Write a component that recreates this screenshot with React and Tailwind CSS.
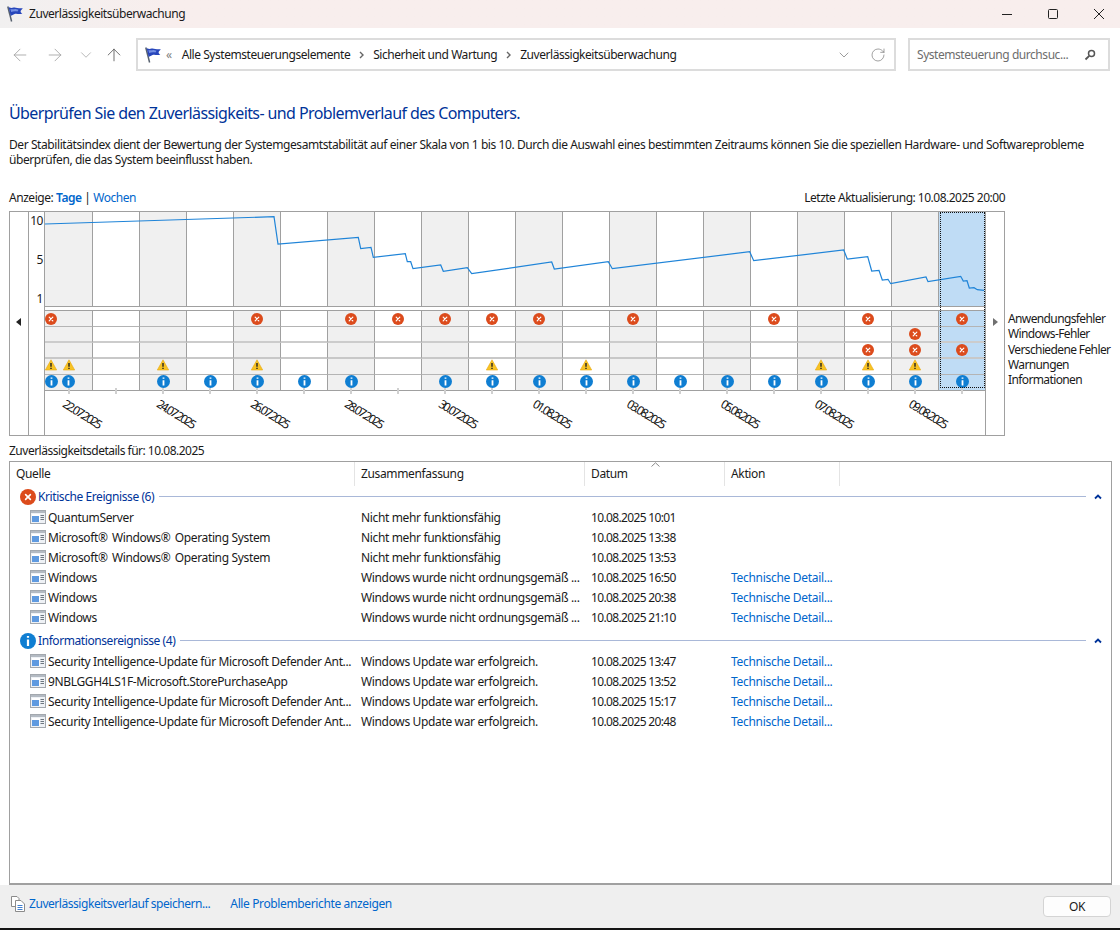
import { ArrowLeft, ArrowRight, ArrowUp, ChevronDown, RotateCw } from "lucide-react";

const days = Array.from({ length: 20 }, (_, i) => i);

const graphPoints =
  "45,224 274,216.7 278,244 358.3,237.3 360.7,248.7 371,247.3 373.3,257.3 405.3,253.7 407.3,261.7 410.7,261.7 413,268.7 440.7,265 443.3,271.3 467.3,267.7 471.7,273.7 551.7,262 554.3,269 608.3,261.7 612.3,268.7 749.7,251.7 753.7,260.7 843.7,250 847.3,259 867.7,256.7 871.7,271 879,270.3 882.3,280 888,279.3 890.7,283.7 926,277 928,281.7 960.7,276.3 963.3,281 967,280.7 969.3,288 974,287.7 977.3,289.7 984,290.3";

// "left" is the extra slot some events use at the start of a day column
const eventRows = [
  { label: "Anwendungsfehler", kind: "error", center: [4, 6, 7, 8, 9, 10, 12, 15, 17, 19], left: [0], cell: "h-[16px] border-b border-[#b4b4b4]" },
  { label: "Windows-Fehler", kind: "error", center: [18], left: [], cell: "h-[16px] border-b-2 border-[#cccccc]" },
  { label: "Verschiedene Fehler", kind: "error", center: [17, 18, 19], left: [], cell: "h-[16px] border-b-2 border-[#c8c8c8]" },
  { label: "Warnungen", kind: "warning", center: [0, 2, 4, 9, 11, 16, 17, 18], left: [0], cell: "h-[16px] border-b border-[#b4b4b4]" },
  { label: "Informationen", kind: "info", center: [0, 2, 3, 4, 5, 6, 8, 9, 10, 11, 12, 13, 14, 15, 16, 17, 18, 19], left: [0], cell: "h-[15px]" },
];

const dateLabels = ["22.07.2025", "24.07.2025", "26.07.2025", "28.07.2025", "30.07.2025", "01.08.2025", "03.08.2025", "05.08.2025", "07.08.2025", "09.08.2025"];

const criticalRows = [
  ["QuantumServer", "Nicht mehr funktionsfähig", "10.08.2025 10:01", ""],
  ["Microsoft® Windows® Operating System", "Nicht mehr funktionsfähig", "10.08.2025 13:38", ""],
  ["Microsoft® Windows® Operating System", "Nicht mehr funktionsfähig", "10.08.2025 13:53", ""],
  ["Windows", "Windows wurde nicht ordnungsgemäß ...", "10.08.2025 16:50", "Technische Detail..."],
  ["Windows", "Windows wurde nicht ordnungsgemäß ...", "10.08.2025 20:38", "Technische Detail..."],
  ["Windows", "Windows wurde nicht ordnungsgemäß ...", "10.08.2025 21:10", "Technische Detail..."],
];

const infoRows = [
  ["Security Intelligence-Update für Microsoft Defender Ant...", "Windows Update war erfolgreich.", "10.08.2025 13:47", "Technische Detail..."],
  ["9NBLGGH4LS1F-Microsoft.StorePurchaseApp", "Windows Update war erfolgreich.", "10.08.2025 13:52", "Technische Detail..."],
  ["Security Intelligence-Update für Microsoft Defender Ant...", "Windows Update war erfolgreich.", "10.08.2025 15:17", "Technische Detail..."],
  ["Security Intelligence-Update für Microsoft Defender Ant...", "Windows Update war erfolgreich.", "10.08.2025 20:48", "Technische Detail..."],
];

function FlagIcon() {
  return (
    <svg width="16" height="16" viewBox="0 0 16 16" className="shrink-0">
      <path d="M0.8 0.5 L4.6 15.5" stroke="#56606e" strokeWidth="1.5" />
      <path d="M1.5 0.8 C3 2.2 5 2.2 6.5 1.6 C8.5 0.8 10.5 2.6 15.8 2.2 C14.8 3.6 13.5 4.4 13.6 5.4 C13.7 6.4 14.6 7 15.4 7.6 C12.5 8.8 10 7.4 7.6 8 C6.2 8.4 5 9.6 3.6 9.8 Z" fill="#2746bb" />
      <path d="M3.4 3 C5 3.8 7 3 8.5 3 L11.5 3.8 L10.5 5.6 C8.5 5 6 5.2 4.2 6 Z" fill="#7590e4" />
    </svg>
  );
}

function ErrorIcon({ size = 12 }) {
  return (
    <svg width={size} height={size} viewBox="0 0 12 12" className="shrink-0">
      <circle cx="6" cy="6" r="6" fill="#dc4b1c" />
      <path d="M4.2 4.2 L7.8 7.8 M7.8 4.2 L4.2 7.8" stroke="#ffffff" strokeWidth="1.2" strokeLinecap="round" />
    </svg>
  );
}

function WarningIcon() {
  return (
    <svg width="12" height="12" viewBox="0 0 12 12" className="mb-[3px] shrink-0">
      <path d="M6 0.8 L11.7 11 L0.3 11 Z" fill="#f7c325" stroke="#e9a80f" strokeWidth="0.6" strokeLinejoin="round" />
      <path d="M6 4 L6 7.8 M6 8.8 L6 10" stroke="#222222" strokeWidth="1.4" />
    </svg>
  );
}

function InfoIcon({ size = 13, className = "" }) {
  return (
    <svg width={size} height={size} viewBox="0 0 13 13" className={`shrink-0 ${className}`}>
      <circle cx="6.5" cy="6.5" r="6.5" fill="#0f7ed2" />
      <path d="M6.5 2.5 L6.5 3.8 M6.5 5.3 L6.5 10.5" stroke="#ffffff" strokeWidth="1.8" />
    </svg>
  );
}

function EventIcon({ kind }) {
  if (kind === "error") return <ErrorIcon />;
  if (kind === "warning") return <WarningIcon />;
  return <InfoIcon className="mb-[3px]" />;
}

function AppIcon() {
  return (
    <svg width="16" height="14" viewBox="0 0 16 14" className="shrink-0">
      <rect x="0.5" y="0.5" width="15" height="13" fill="#eef1f5" stroke="#a3a8ae" />
      <rect x="1" y="1" width="14" height="2" fill="#b3bac2" />
      <rect x="2" y="4" width="8" height="8" fill="#ffffff" />
      <rect x="2" y="6" width="7" height="6" fill="#5f9ae0" />
      <path d="M10.5 5.5 H14 M10.5 7.5 H14 M10.5 9.5 H14" stroke="#6d7780" />
    </svg>
  );
}

function DocsIcon() {
  return (
    <svg width="16" height="16" viewBox="0 0 16 16" className="shrink-0" fill="#ffffff" stroke="#8b8b8b">
      <path d="M1.5 0.5 H7 L9 2.5 V10.5 H1.5 Z" />
      <path d="M5.5 4.5 H11 L14.5 8 V15.5 H5.5 Z" />
      <path d="M7.5 9.5 H12.5 M7.5 11.5 H12.5 M7.5 13.5 H12.5" stroke="#3f7fd0" />
    </svg>
  );
}

function Collapse() {
  return (
    <svg width="8" height="6" viewBox="0 0 8 6">
      <path d="M1 4.5 L4 1.5 L7 4.5" fill="none" stroke="#003399" strokeWidth="1.8" />
    </svg>
  );
}

function Crumb() {
  return (
    <svg width="5" height="8" viewBox="0 0 5 8" className="mx-[9px] shrink-0">
      <path d="M1 1 L4 4 L1 7" fill="none" stroke="#666666" strokeWidth="1.4" />
    </svg>
  );
}

function GroupHeader({ icon, title, className }) {
  return (
    <div className={`flex h-[21px] items-center pl-[10px] pr-[9px] ${className}`}>
      {icon}
      <span className="ml-[2px] tracking-[-0.42px] text-[#003399]">{title}</span>
      <div className="ml-[5px] h-px flex-1 bg-[#a9b8d8]" />
      <div className="ml-[8px] mr-[0px] flex w-[8px] justify-center">
        <Collapse />
      </div>
    </div>
  );
}

// the ® signs sit a little apart from the word after them
function SourceName({ name }) {
  const parts = name.split("®");
  return (
    <span>
      {parts.map((part, i) => (
        <span key={i}>
          {part}
          {i < parts.length - 1 && <span className="mr-[1.5px]">®</span>}
        </span>
      ))}
    </span>
  );
}

function EventRow({ row }) {
  return (
    <div className="grid h-[20px] grid-cols-[345px_230px_140px_115px] items-center tracking-[-0.35px]">
      <div className="flex items-center gap-[2px] whitespace-pre pl-[20px]">
        <AppIcon />
        <SourceName name={row[0]} />
      </div>
      <div className="overflow-hidden whitespace-nowrap pl-[6px]">{row[1]}</div>
      <div className="whitespace-nowrap pl-[6px] tracking-[-0.65px]">{row[2]}</div>
      <div className="whitespace-nowrap pl-[6px] tracking-[-0.3px] text-[#0066cc]">{row[3]}</div>
    </div>
  );
}

export default function App() {
  return (
    <div className="h-[932px] w-[1120px] overflow-hidden bg-white font-['Noto_Sans',sans-serif] text-[12px] leading-[15px] tracking-[-0.45px] text-[#1a1a1a]">
      {/* Title bar */}
      <div className="flex h-[28px] items-center bg-linear-to-r from-[#f1f0f0] to-[#f8eeed] to-[15%] pl-[7px]">
        <FlagIcon />
        <span className="mb-[2px] ml-[6px]">Zuverlässigkeitsüberwachung</span>
        <div className="ml-auto flex items-center">
          <svg width="12" height="12" viewBox="0 0 12 12" className="mr-[34px]">
            <path d="M1 6.5 H11" stroke="#222222" />
          </svg>
          <svg width="12" height="12" viewBox="0 0 12 12" className="mr-[34px]">
            <rect x="1.5" y="1.5" width="9" height="9" rx="1" fill="none" stroke="#222222" />
          </svg>
          <svg width="12" height="12" viewBox="0 0 12 12" className="mr-[15px]">
            <path d="M1 1 L11 11 M11 1 L1 11" stroke="#222222" />
          </svg>
        </div>
      </div>

      {/* Navigation */}
      <div className="flex items-center pt-[10px]">
        <ArrowLeft size={20} strokeWidth={1} className="ml-[10px] text-[#a0a0a0]" />
        <ArrowRight size={20} strokeWidth={1} className="ml-[15px] text-[#a0a0a0]" />
        <ChevronDown size={18} strokeWidth={1} className="ml-[12px] text-[#a0a0a0]" />
        <ArrowUp size={20} strokeWidth={1} className="ml-[9px] text-[#555555]" />
        <div className="ml-[12px] flex h-[33px] w-[760px] items-center border-2 border-[#dcdcdc] pl-[7px]">
          <FlagIcon />
          <span className="ml-[5px] text-[#808080]">«</span>
          <span className="ml-[10px]">Alle Systemsteuerungselemente</span>
          <Crumb />
          <span>Sicherheit und Wartung</span>
          <Crumb />
          <span>Zuverlässigkeitsüberwachung</span>
          <ChevronDown size={16} strokeWidth={1.1} className="ml-auto text-[#777777]" />
          <RotateCw size={16} strokeWidth={1.1} className="ml-[18px] mr-[8px] text-[#808080]" />
        </div>
        <div className="ml-[12px] flex h-[33px] w-[202px] items-center border-2 border-[#dcdcdc] pl-[7px] pr-[12px] text-[#6d6d6d]">
          <span className="whitespace-nowrap">Systemsteuerung durchsuc...</span>
          <svg width="12" height="12" viewBox="0 0 12 12" className="ml-auto">
            <circle cx="7.5" cy="4.5" r="3" fill="none" stroke="#555555" strokeWidth="1.5" />
            <path d="M5.2 6.8 L1.5 10.5" stroke="#555555" strokeWidth="1.8" />
          </svg>
        </div>
      </div>

      {/* Intro */}
      <div className="pl-[9px]">
        <h1 className="mt-[32px] text-[16px] leading-[21px] tracking-[-0.6px] text-[#003399]">
          Überprüfen Sie den Zuverlässigkeits- und Problemverlauf des Computers.
        </h1>
        <p className="mt-[13px] w-[1095px] tracking-[-0.42px]">
          Der Stabilitätsindex dient der Bewertung der Systemgesamtstabilität auf einer Skala von 1 bis 10. Durch die Auswahl eines bestimmten Zeitraums können Sie die speziellen Hardware- und Softwareprobleme überprüfen, die das System beeinflusst haben.
        </p>
        <div className="mt-[23px] flex w-[996px] justify-between">
          <div>
            Anzeige: <span className="font-semibold text-[#0066cc]">Tage</span> | <span className="text-[#0066cc]">Wochen</span>
          </div>
          <div className="tracking-[-0.5px]">Letzte Aktualisierung: 10.08.2025 20:00</div>
        </div>

        {/* Chart */}
        <div className="mt-[6px] flex">
          <div className="relative flex h-[225px] w-[996px] border border-[#a0a0a0]">
            <div className="flex w-[19px] shrink-0 justify-center border-r border-[#a0a0a0] pt-[106px]">
              <svg width="5" height="8" viewBox="0 0 5 8" className="mr-[2px]">
                <path d="M5 0 V8 L0 4 Z" fill="#222222" />
              </svg>
            </div>
            <div className="flex w-[16px] shrink-0 flex-col items-end gap-[24px] border-r border-[#a0a0a0] pr-px pt-px">
              <span>10</span>
              <span>5</span>
              <span>1</span>
            </div>
            <div className="w-[940px] shrink-0">
              {/* Stability graph */}
              <div className="relative grid h-[95px] grid-cols-[repeat(20,47px)] border-b border-[#a0a0a0]">
                {days.map((d) => (
                  <div
                    key={d}
                    className={`${d > 0 ? "border-l border-[#a0a0a0]" : ""} ${d === 19 ? "bg-[#bfdcf5]" : d % 2 === 0 ? "bg-[#f0f0f0]" : "bg-white"}`}
                  />
                ))}
                <svg viewBox="45 212 940 94" width="940" height="94" className="absolute left-0 top-0">
                  <polyline points={graphPoints} fill="none" stroke="#1f84d8" strokeWidth="1.2" />
                </svg>
              </div>

              {/* Event rows */}
              <div className="mt-[3px] border-t border-[#a0a0a0]">
                {eventRows.map((row) => (
                  <div key={row.label} className="grid grid-cols-[repeat(20,47px)]">
                    {days.map((d) => (
                      <div
                        key={d}
                        className={`relative flex items-center justify-center ${row.cell} ${d > 0 ? "border-l border-l-[#a0a0a0]" : ""} ${d === 19 ? "bg-[#bfdcf5]" : d % 2 === 0 ? "bg-[#f0f0f0]" : "bg-white"}`}
                      >
                        {row.left.includes(d) && (
                          <div className="absolute left-0 top-0 flex h-full items-center">
                            <EventIcon kind={row.kind} />
                          </div>
                        )}
                        {row.center.includes(d) && <EventIcon kind={row.kind} />}
                      </div>
                    ))}
                  </div>
                ))}
              </div>

              {/* Date axis */}
              <div className="relative border-t border-[#a0a0a0]">
                <div className="grid h-[45px] grid-cols-[repeat(20,47px)]">
                  {days.map((d) => (
                    <div key={d} className="relative flex justify-center">
                      <div className="-mt-[3px] h-[6px] w-[2px] bg-[#d0d0d0]" />
                      {d % 2 === 0 && (
                        <span className="absolute left-[23px] top-[5px] origin-top-left rotate-[32deg] whitespace-nowrap tracking-[-1.9px] text-[#111111]">
                          {dateLabels[d / 2]}
                        </span>
                      )}
                    </div>
                  ))}
                </div>
              </div>
            </div>
            <div className="flex flex-1 justify-center border-l border-[#a0a0a0] pt-[106px]">
              <svg width="5" height="8" viewBox="0 0 5 8">
                <path d="M0 0 V8 L5 4 Z" fill="#707070" />
              </svg>
            </div>

            {/* Keyboard focus on the selected day */}
            <div className="absolute left-[930px] top-0 h-[176px] w-[45px] border border-dotted border-[#111111]" />
          </div>

          <div className="ml-[3px] flex flex-col gap-[0.25px] whitespace-nowrap pt-[100px] tracking-[-0.62px] text-[#1a1a1a]">
            {eventRows.map((row) => (
              <span key={row.label}>{row.label}</span>
            ))}
          </div>
        </div>

        <div className="mt-[7px] tracking-[-0.5px]">Zuverlässigkeitsdetails für: 10.08.2025</div>
      </div>

      {/* Details list */}
      <div className="ml-[9px] mt-[3px] h-[424px] w-[1103px] border border-b-2 border-[#a0a0a0]">
        <div className="relative grid h-[24px] grid-cols-[345px_230px_140px_115px] items-center tracking-[-0.35px]">
          <div className="flex h-full items-center border-r border-[#e4e4e4] pb-px pl-[6px]">Quelle</div>
          <div className="flex h-full items-center border-r border-[#e4e4e4] pb-px pl-[6px]">Zusammenfassung</div>
          <div className="flex h-full items-center border-r border-[#e4e4e4] pb-px pl-[6px]">Datum</div>
          <div className="flex h-full items-center border-r border-[#e4e4e4] pb-px pl-[6px]">Aktion</div>
          <svg width="9" height="5" viewBox="0 0 9 5" className="absolute left-[641px] top-0">
            <path d="M0.5 4.5 L4.5 0.8 L8.5 4.5" fill="none" stroke="#8a8a8a" />
          </svg>
        </div>
        <GroupHeader icon={<ErrorIcon size={16} />} title="Kritische Ereignisse (6)" />
        {criticalRows.map((row, i) => (
          <EventRow key={i} row={row} />
        ))}
        <GroupHeader icon={<InfoIcon size={16} />} title="Informationsereignisse (4)" className="mt-[3px]" />
        {infoRows.map((row, i) => (
          <EventRow key={i} row={row} />
        ))}
      </div>

      {/* Footer */}
      <div className="flex h-[45px] items-center border-b-2 border-[#141414] bg-[#efefef] pb-[6px] pl-[10px] pr-[9px]">
        <DocsIcon />
        <span className="ml-[3px] text-[#0066cc]">Zuverlässigkeitsverlauf speichern...</span>
        <span className="ml-[20px] tracking-[-0.37px] text-[#0066cc]">Alle Problemberichte anzeigen</span>
        <button className="ml-auto mt-[5px] h-[21px] w-[68px] rounded-[4px] border border-[#d4d4d4] bg-[#fdfdfd] text-[#1a1a1a]">OK</button>
      </div>
    </div>
  );
}
